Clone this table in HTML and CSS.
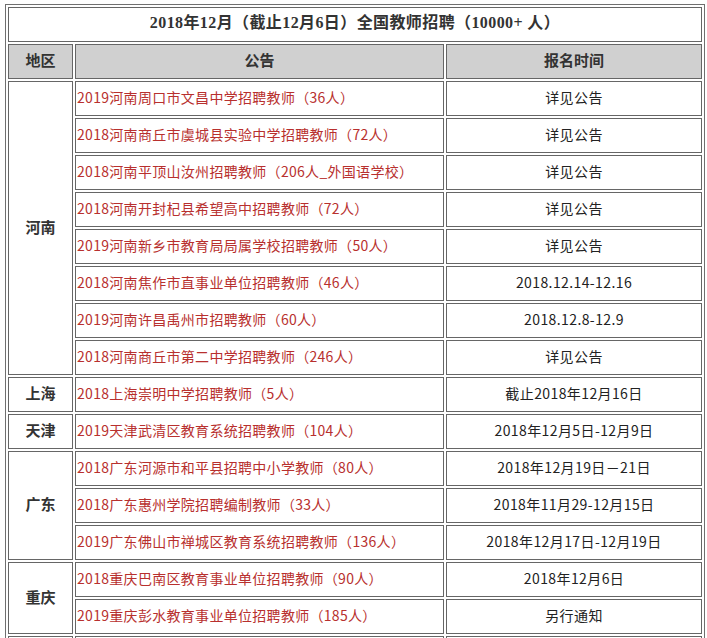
FILE: index.html
```html
<!DOCTYPE html>
<html lang="zh-CN">
<head>
<meta charset="utf-8">
<title>2018年12月全国教师招聘</title>
<link rel="stylesheet" href="styles.css">
</head>
<body>
<table class="recruit">
  <colgroup>
    <col class="c-region">
    <col class="c-notice">
    <col class="c-time">
  </colgroup>
  <tr>
    <td class="title" colspan="3">2018年12月（截止12月6日）全国教师招聘（10000+ 人）</td>
  </tr>
  <tr class="head">
    <th>地区</th>
    <th>公告</th>
    <th>报名时间</th>
  </tr>
  <tr>
    <td class="region" rowspan="8">河南</td>
    <td class="notice"><a href="#">2019河南周口市文昌中学招聘教师（36人）</a></td>
    <td class="time">详见公告</td>
  </tr>
  <tr>
    <td class="notice"><a href="#">2018河南商丘市虞城县实验中学招聘教师（72人）</a></td>
    <td class="time">详见公告</td>
  </tr>
  <tr>
    <td class="notice"><a href="#">2018河南平顶山汝州招聘教师（206人_外国语学校）</a></td>
    <td class="time">详见公告</td>
  </tr>
  <tr>
    <td class="notice"><a href="#">2018河南开封杞县希望高中招聘教师（72人）</a></td>
    <td class="time">详见公告</td>
  </tr>
  <tr>
    <td class="notice"><a href="#">2019河南新乡市教育局局属学校招聘教师（50人）</a></td>
    <td class="time">详见公告</td>
  </tr>
  <tr>
    <td class="notice"><a href="#">2018河南焦作市直事业单位招聘教师（46人）</a></td>
    <td class="time">2018.12.14-12.16</td>
  </tr>
  <tr>
    <td class="notice"><a href="#">2019河南许昌禹州市招聘教师（60人）</a></td>
    <td class="time">2018.12.8-12.9</td>
  </tr>
  <tr>
    <td class="notice"><a href="#">2018河南商丘市第二中学招聘教师（246人）</a></td>
    <td class="time">详见公告</td>
  </tr>
  <tr>
    <td class="region">上海</td>
    <td class="notice"><a href="#">2018上海崇明中学招聘教师（5人）</a></td>
    <td class="time">截止2018年12月16日</td>
  </tr>
  <tr>
    <td class="region">天津</td>
    <td class="notice"><a href="#">2019天津武清区教育系统招聘教师（104人）</a></td>
    <td class="time">2018年12月5日-12月9日</td>
  </tr>
  <tr>
    <td class="region" rowspan="3">广东</td>
    <td class="notice"><a href="#">2018广东河源市和平县招聘中小学教师（80人）</a></td>
    <td class="time">2018年12月19日－21日</td>
  </tr>
  <tr>
    <td class="notice"><a href="#">2018广东惠州学院招聘编制教师（33人）</a></td>
    <td class="time">2018年11月29-12月15日</td>
  </tr>
  <tr>
    <td class="notice"><a href="#">2019广东佛山市禅城区教育系统招聘教师（136人）</a></td>
    <td class="time">2018年12月17日-12月19日</td>
  </tr>
  <tr>
    <td class="region" rowspan="2">重庆</td>
    <td class="notice"><a href="#">2018重庆巴南区教育事业单位招聘教师（90人）</a></td>
    <td class="time">2018年12月6日</td>
  </tr>
  <tr>
    <td class="notice"><a href="#">2019重庆彭水教育事业单位招聘教师（185人）</a></td>
    <td class="time">另行通知</td>
  </tr>
  <tr>
    <td class="region"></td>
    <td class="notice"></td>
    <td class="time"></td>
  </tr>
</table>
</body>
</html>
```
FILE: styles.css
```css
html, body {
  margin: 0;
  padding: 0;
  background: #ffffff;
}

body {
  padding: 4px 0 0 5px;
  font-family: "Noto Sans CJK SC", "Liberation Sans", sans-serif;
  font-size: 14px;
  color: #222222;
}

.recruit {
  width: 700px;
  table-layout: fixed;
  border-collapse: separate;
  border-spacing: 2px;
  border: 1px solid #6f6f6f;
}

.c-region { width: 65px; }
.c-notice { width: 369px; }
.c-time { width: 256px; }

.recruit td,
.recruit th {
  box-sizing: border-box;
  height: 35px;
  padding: 0 1px 3px 1px;
  border: 1px solid #666666;
  vertical-align: middle;
  line-height: 20px;
  white-space: nowrap;
  overflow: hidden;
}

.title {
  text-align: center;
  font-family: "Liberation Serif", "Noto Sans CJK SC", serif;
  font-weight: bold;
  font-size: 16px;
  letter-spacing: 0.4px;
  color: #333333;
}

.head th {
  background: #d0d0d0;
  font-weight: bold;
  font-size: 15px;
  color: #333333;
  text-align: center;
}

.region {
  text-align: center;
  font-weight: bold;
  font-size: 15px;
  color: #333333;
}

.notice {
  text-align: left;
  letter-spacing: 0.3px;
}

.notice a {
  color: #b8302e;
  text-decoration: none;
}

.time {
  text-align: center;
  letter-spacing: 0.4px;
  color: #222222;
}
```
